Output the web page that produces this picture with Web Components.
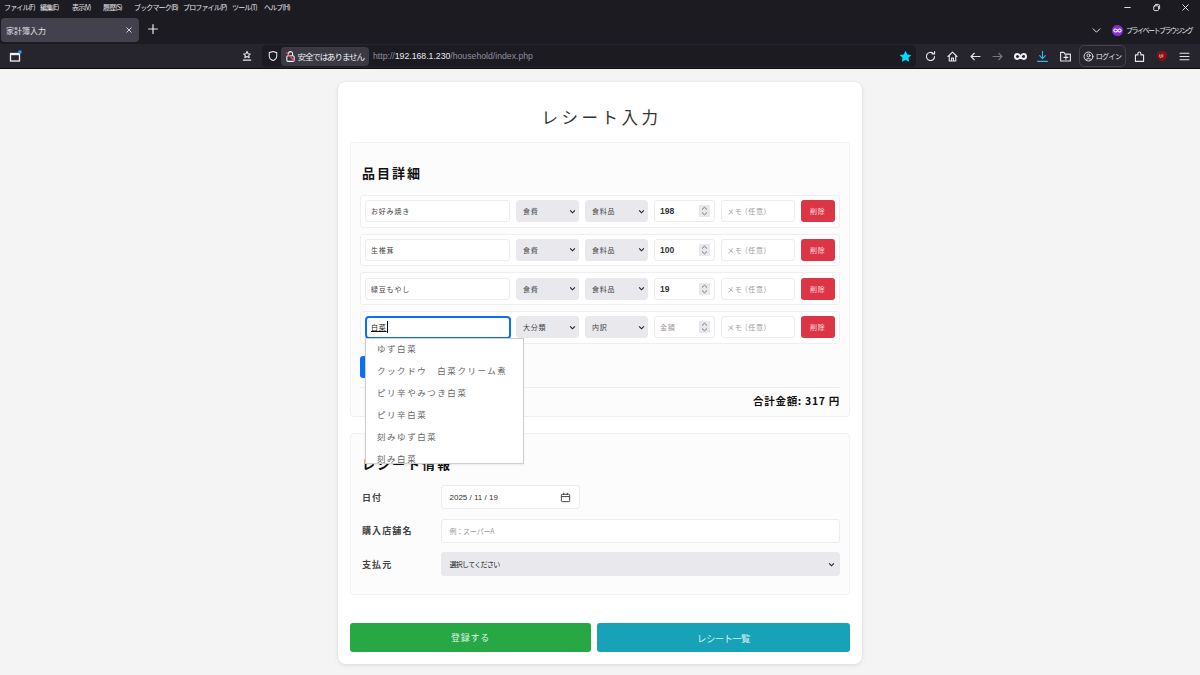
<!DOCTYPE html>
<html lang="ja"><head><meta charset="utf-8"><title>家計簿入力</title>
<style>
html,body{margin:0;padding:0;height:675px;overflow:hidden;background:#f4f4f5;font-family:"Noto Sans CJK JP","Noto Sans",sans-serif}
</style></head><body>
<browser-chrome></browser-chrome>
<receipt-card heading="レシート入力">
  <form-section heading="品目詳細">
    <item-row name="お好み焼き" cat="食費" sub="食料品" amount="198"></item-row>
    <item-row name="生椎茸" cat="食費" sub="食料品" amount="100"></item-row>
    <item-row name="緑豆もやし" cat="食費" sub="食料品" amount="19"></item-row>
    <item-row name="白菜" cat="大分類" sub="内訳" focused>
      <suggest-list items="ゆず白菜|クックドウ　白菜クリーム煮|ピリ辛やみつき白菜|ピリ辛白菜|刻みゆず白菜|刻み白菜"></suggest-list>
    </item-row>
    <add-and-total total="合計金額: 317 円"></add-and-total>
  </form-section>
  <form-section heading="レシート情報" second>
    <field-row label="日付" kind="date" value="2025 / 11 / 19"></field-row>
    <field-row label="購入店舗名" kind="text" value="例：スーパーA"></field-row>
    <field-row label="支払元" kind="select" value="選択してください"></field-row>
  </form-section>
  <action-bar></action-bar>
</receipt-card>
<script>
const JP='"Noto Sans CJK JP","Noto Sans",sans-serif';
const chev=(w=7)=>`<svg width="${w}" height="${w}" viewBox="0 0 8 8"><path d="M1.300 2.800 4 5.500 6.700 2.800" fill="none" stroke="#222" stroke-width="1.300"/></svg>`;
function def(name,fn){customElements.define(name,class extends HTMLElement{connectedCallback(){if(this.shadowRoot)return;const s=this.attachShadow({mode:'open'});s.innerHTML=fn(this);}});}
const ic=(d,extra='',w=14,stroke='#e6e6ea')=>`<svg width="${w}" height="${w}" viewBox="0 0 16 16" fill="none" stroke="${stroke}" stroke-width="1.400" stroke-linecap="round" stroke-linejoin="round" ${extra}>${d}</svg>`;

def('browser-chrome',()=>`<style>
:host{display:block;height:69px;background:#1c1b22;color:#e4e4e8;font-family:${JP};overflow:hidden}
.menu{height:14px;display:flex;align-items:center;padding-left:4px;font-size:7px;line-height:14px;letter-spacing:-.85px}
.menu>span{white-space:nowrap;flex:none}
.win{margin-left:auto;display:flex;align-items:center}
.win span{width:29px;display:flex;justify-content:center}
.tabs{height:30px;display:flex;align-items:flex-start;padding:4px 0 0 1px;box-sizing:border-box}
.tab{width:138px;height:24px;background:#42414d;border-radius:4px;display:flex;align-items:center;padding:0 5px;box-sizing:border-box;font-size:8px;justify-content:space-between}
.plus{margin:4px 0 0 7px;display:flex}
.tabr{margin-left:auto;display:flex;align-items:center;gap:7px;height:24px;padding-right:8px;font-size:7px;letter-spacing:-1.500px}
.bar{height:24px;background:#26252e;display:flex;align-items:center;box-sizing:border-box;position:relative}
.bar:after{content:"";position:absolute;left:0;right:0;bottom:-1px;height:1px;background:#0c0c0d}
.left{width:236px;box-sizing:border-box;padding-left:9px;display:flex;flex:none}
.share{width:22px;display:flex;justify-content:center;margin-right:4px;flex:none}
.url{width:654px;flex:none;height:22px;background:#1c1b22;border-radius:4px;display:flex;align-items:center;font-size:8.700px;color:#8f8f9d;box-sizing:border-box;padding-left:3px}
.sh{width:15.500px;display:flex;justify-content:center;flex:none}
.badge{background:#3a3944;border-radius:4px;height:19px;width:88px;flex:none;display:flex;align-items:center;padding-left:3px;gap:1px;box-sizing:border-box;color:#f0f0f4;font-size:8.500px;letter-spacing:-1.100px;white-space:nowrap}
.badge svg{flex:none}
.u{margin-left:4.500px;font-family:"Liberation Sans",sans-serif}
.u b{font-weight:400;color:#e8e8ec}
.star{margin-left:auto;margin-right:4px;display:flex}
.tools{display:flex;align-items:center;margin-left:3px;flex:1}
.t{width:22.500px;display:flex;justify-content:center;flex:none}
.login{width:47px;height:22px;border:1px solid #42414d;border-radius:5px;box-sizing:border-box;display:flex;align-items:center;justify-content:center;gap:2px;font-size:7px;letter-spacing:-.6px;margin-left:2px;margin-right:2px}
</style>
<div class="menu"><span style="width:36px">ファイル(F)</span><span style="width:32px">編集(E)</span><span style="width:31px">表示(V)</span><span style="width:31px">履歴(S)</span><span style="width:49px">ブックマーク(B)</span><span style="width:49px">プロファイル(P)</span><span style="width:32px">ツール(T)</span><span>ヘルプ(H)</span>
<div class="win"><span>${ic('<path d="M4 8h8"/>','',11)}</span><span>${ic('<rect x="4" y="5.500" width="7" height="7" rx="1.500"/><path d="M6.500 3.500h4a2 2 0 0 1 2 2v4"/>','',11)}</span><span>${ic('<path d="M4 4l8 8M12 4l-8 8"/>','',11)}</span></div></div>
<div class="tabs"><div class="tab"><span>家計簿入力</span>${ic('<path d="M4.500 4.500l7 7M11.500 4.500l-7 7"/>','',10)}</div>
<div class="plus">${ic('<path d="M8 3v10M3 8h10"/>','',14)}</div>
<div class="tabr">${ic('<path d="M3 5.500 8 10.500 13 5.500"/>','',11)}<span style="display:flex;align-items:center;gap:3px;margin-left:3px"><svg width="11" height="11" viewBox="0 0 16 16"><circle cx="8" cy="8" r="8" fill="#8a2fd8"/><path d="M8 8c-1-1.800-2-2.300-3-2.300a2.300 2.300 0 0 0 0 4.600c1 0 2-.5 3-2.300zm0 0c1-1.800 2-2.300 3-2.300a2.300 2.300 0 0 1 0 4.600c-1 0-2-.5-3-2.300z" fill="none" stroke="#fff" stroke-width="1.500"/></svg><span>プライベートブラウジング</span></span></div></div>
<div class="bar">
<div class="left"><svg width="13" height="13" viewBox="0 0 13 13"><rect x="1.500" y="3.500" width="9" height="7.500" fill="none" stroke="#f0f0f4" stroke-width="1.300"/><rect x="1" y="3" width="10" height="2.200" fill="#f0f0f4"/><circle cx="11" cy="2" r="1.800" fill="#2a9df4"/></svg></div>
<div class="share">${ic('<path d="M8 1.800 9.500 5l3 .3-2.200 2 .6 3-2.900-1.600-2.900 1.600.6-3-2.200-2 3-.3zM3 13.500h10"/>','',12)}</div>
<div class="url"><span class="sh">${ic('<path d="M8 2 13 3.500v4.200C13 11 10.500 13.200 8 14c-2.500-.8-5-3-5-6.300V3.500z"/>','',12)}</span>
<div class="badge"><svg width="13" height="13" viewBox="0 0 16 16" fill="none"><rect x="3.500" y="7" width="9" height="7" rx="1.500" stroke="#f0f0f4" stroke-width="1.300"/><path d="M5.500 7V4.500a2.500 2.500 0 0 1 5 0V7" stroke="#f0f0f4" stroke-width="1.300"/><path d="M3 3l10 11" stroke="#ff4f5e" stroke-width="1.500"/></svg><span>安全ではありません</span></div>
<span class="u">http://<b>192.168.1.230</b>/household/index.php</span>
<span class="star"><svg width="13" height="13" viewBox="0 0 16 16"><path d="M8 .8 10.200 5.400l5 .7-3.600 3.500.9 5-4.500-2.400-4.500 2.400.9-5L.8 6.100l5-.7z" fill="#00ddff"/></svg></span></div>
<div class="tools">
<span class="t">${ic('<path d="M13 8a5 5 0 1 1-1.700-3.800M13 1.800v3h-3"/>','',13)}</span>
<span class="t">${ic('<path d="M2.500 8 8 2.500 13.500 8M4 7v6.500h8V7M6.800 13.500V10h2.400v3.500"/>','',13)}</span>
<span class="t">${ic('<path d="M13.500 8h-11M6.500 4l-4 4 4 4"/>','',13)}</span>
<span class="t">${ic('<path d="M2.500 8h11M9.500 4l4 4-4 4"/>','',13,'#77767f')}</span>
<span class="t"><svg width="13" height="13" viewBox="0 0 16 16" fill="none" stroke="#f0f0f4" stroke-width="2.400"><path d="M8 8C6.700 5.700 5.500 5 4.200 5a3 3 0 0 0 0 6c1.300 0 2.500-.7 3.800-3zm0 0c1.300-2.300 2.500-3 3.800-3a3 3 0 0 1 0 6c-1.300 0-2.500-.7-3.800-3z"/></svg></span>
<span class="t">${ic('<path d="M8 1.500v9M4.500 7 8 10.500 11.500 7M2 14h12"/>','',13,'#2fb5e8')}</span>
<span class="t">${ic('<path d="M2 3h4l1.500 2H14v8.500H2zM8.500 6.500v5M6 9h5"/>','',13)}</span>
<div class="login">${ic('<circle cx="8" cy="8" r="6.500"/><circle cx="8" cy="6.500" r="2.200"/><path d="M4 12.500c1-2 7-2 8 0"/>','',11)}<span>ログイン</span></div>
<span class="t" style="margin-left:1px">${ic('<path d="M3 14V6h3V4.200a1.800 1.800 0 0 1 3.600 0V6H13v8z"/>','',13)}</span>
<span class="t"><svg width="12" height="12" viewBox="0 0 16 16"><path d="M8 1 14.500 3v5c0 3.500-3 6-6.500 7-3.500-1-6.500-3.500-6.500-7V3z" fill="#8a1015"/><path d="M5 6v3a1 1 0 0 0 2 0V6M9 5.500v4.500" stroke="#e8c8c8" stroke-width="1" fill="none"/></svg></span>
<span class="t">${ic('<path d="M2.500 4h11M2.500 8h11M2.500 12h11"/>','',13)}</span>
</div></div>`);

def('receipt-card',h=>`<style>
:host{display:block;box-sizing:border-box;width:524px;margin:13px auto 0;background:#fff;border-radius:8px;box-shadow:0 1px 4px rgba(0,0,0,.12);padding:0 12px 12px;font-family:${JP};position:relative}
h1{margin:0;height:60px;padding:22px 0 0 3px;box-sizing:border-box;text-align:center;font-size:16.500px;line-height:26px;font-weight:400;letter-spacing:3.500px;color:#333}
</style><h1>${h.getAttribute('heading')}</h1><slot></slot>`);

def('form-section',h=>`<style>
:host{display:block;box-sizing:border-box;background:#fcfcfc;border:1px solid #f1f1f2;border-radius:4px;padding:${h.hasAttribute('second')?'20px 9px 18px 11px':'20px 9px 0'};margin-top:${h.hasAttribute('second')?'16px':'0'}}
h2{margin:0 0 ${h.hasAttribute('second')?'11px':'12px'};height:20px;font-size:13px;line-height:20px;font-weight:700;letter-spacing:2px;color:#111;padding-left:${h.hasAttribute('second')?'0':'2px'}}
</style><h2>${h.getAttribute('heading')}</h2><slot></slot>`);

def('item-row',h=>{const f=h.hasAttribute('focused'),amt=h.getAttribute('amount');return `<style>
:host{display:flex;box-sizing:border-box;height:32.670px;margin-bottom:6px;background:#fff;border:1px solid #efeff0;border-radius:3px;padding:0 4px;align-items:center;gap:6px;position:relative;font-size:7px;letter-spacing:.8px;color:#444}
.c{box-sizing:border-box;height:22px;border:1px solid #ececee;border-radius:3px;background:#fff;display:flex;align-items:center;padding-left:5px;white-space:nowrap}
.n{width:145px;${f?'height:22.500px;border:2px solid #0d6efd;width:146px;margin-right:-1px;border-radius:4px;padding-left:4px;color:#111;':''}}
.n u{text-underline-offset:1px}.caret{width:1px;height:12px;background:#111}
.s{background:#e9e9ed;border-color:#e9e9ed;justify-content:space-between;padding:0 2px 0 6px;width:63px;color:#444}
.a{width:61px;justify-content:space-between;padding-right:4px;font-family:"Liberation Sans",sans-serif;font-size:8.500px;letter-spacing:0;font-weight:700;color:#333}
.a.e{font-family:${JP};font-weight:400;font-size:7px;letter-spacing:.8px;color:#999}
.spin{width:11px;height:12px;background:#e9e9ed;display:flex;align-items:center;justify-content:center}
.m{width:74px;color:#999}
.d{box-sizing:border-box;width:33.500px;height:22px;background:#dc3545;border-radius:3px;color:#fbdfe2;display:flex;align-items:center;justify-content:center}
</style>
<div class="c n">${f?'<u>'+h.getAttribute('name')+'</u><span class="caret"></span>':h.getAttribute('name')}</div>
<div class="c s"><span>${h.getAttribute('cat')}</span>${chev()}</div>
<div class="c s"><span>${h.getAttribute('sub')}</span>${chev()}</div>
<div class="c a ${amt?'':'e'}"><span>${amt||'金額'}</span><span class="spin"><svg width="7" height="10" viewBox="0 0 7 10" fill="none" stroke="#777" stroke-width="1"><path d="M1 3.500 3.500 1.200 6 3.500M1 6.500 3.500 8.800 6 6.500"/></svg></span></div>
<div class="c m">メモ (任意)</div>
<div class="d">削除</div><slot></slot>`});

def('suggest-list',h=>`<style>
:host{position:absolute;left:4px;top:26.500px;width:159px;height:126px;box-sizing:border-box;background:#fff;border:1px solid #cfcfcf;box-shadow:0 1px 2px rgba(0,0,0,.08);z-index:5;overflow:hidden;font-size:8.500px;letter-spacing:1.550px;color:#666;display:block}
div{height:22px;line-height:19px;padding-left:11px;white-space:nowrap}
</style>${h.getAttribute('items').split('|').map(t=>`<div>${t}</div>`).join('')}`);

def('add-and-total',h=>`<style>
:host{display:block;margin-top:12px;font-family:${JP}}
.b{width:120px;height:22.700px;background:#0d6efd;border-radius:3px}
.t{margin-top:9px;border-top:1px solid #efeff0;height:28px;line-height:26px;text-align:right;font-size:10.500px;font-weight:700;letter-spacing:.7px;color:#111}
</style><div class="b"></div><div class="t">${h.getAttribute('total')}</div>`);

def('field-row',h=>{const k=h.getAttribute('kind'),v=h.getAttribute('value');
const inner=k==='date'?`<span>${v}</span><svg width="11" height="11" viewBox="0 0 12 12" fill="none" stroke="#333" stroke-width="1"><rect x="1.500" y="2.500" width="9" height="8" rx="1"/><path d="M1.500 5h9M4 1v2M8 1v2"/></svg>`:k==='select'?`<span>${v}</span>${chev()}`:`<span>${v}</span>`;
return `<style>
:host{display:flex;align-items:center;height:23.800px;margin-bottom:9.700px;font-family:${JP}}
:host(:last-child){margin-bottom:0}
label{width:79px;flex:none;font-size:9px;font-weight:700;letter-spacing:1.100px;color:#444;white-space:nowrap}
.c{box-sizing:border-box;height:100%;border:1px solid #ececee;border-radius:3px;background:#fff;display:flex;align-items:center;justify-content:space-between;padding:0 7.500px;font-size:7px;letter-spacing:-.2px;flex:1;color:#999;white-space:nowrap}
.date{flex:none;width:139px;font-family:"Liberation Sans",sans-serif;color:#333;font-size:8px;letter-spacing:0;padding-right:8px}
.select{background:#e9e9ed;border-color:#e9e9ed;color:#222;letter-spacing:-.7px;padding-right:4px}
</style><label>${h.getAttribute('label')}</label><div class="c ${k}">${inner}</div>`});

def('action-bar',()=>`<style>
:host{display:flex;gap:6px;margin-top:28px;font-family:${JP}}
div{height:29px;border-radius:3px;color:#dff3e4;display:flex;align-items:center;justify-content:center;font-size:9px;letter-spacing:.8px}
.g{background:#28a745;width:241px}.t{background:#17a2b8;flex:1;color:#d5f0f5;font-size:9.500px;letter-spacing:-.7px}
</style><div class="g">登録する</div><div class="t">レシート一覧</div>`);
</script>
</body></html>
